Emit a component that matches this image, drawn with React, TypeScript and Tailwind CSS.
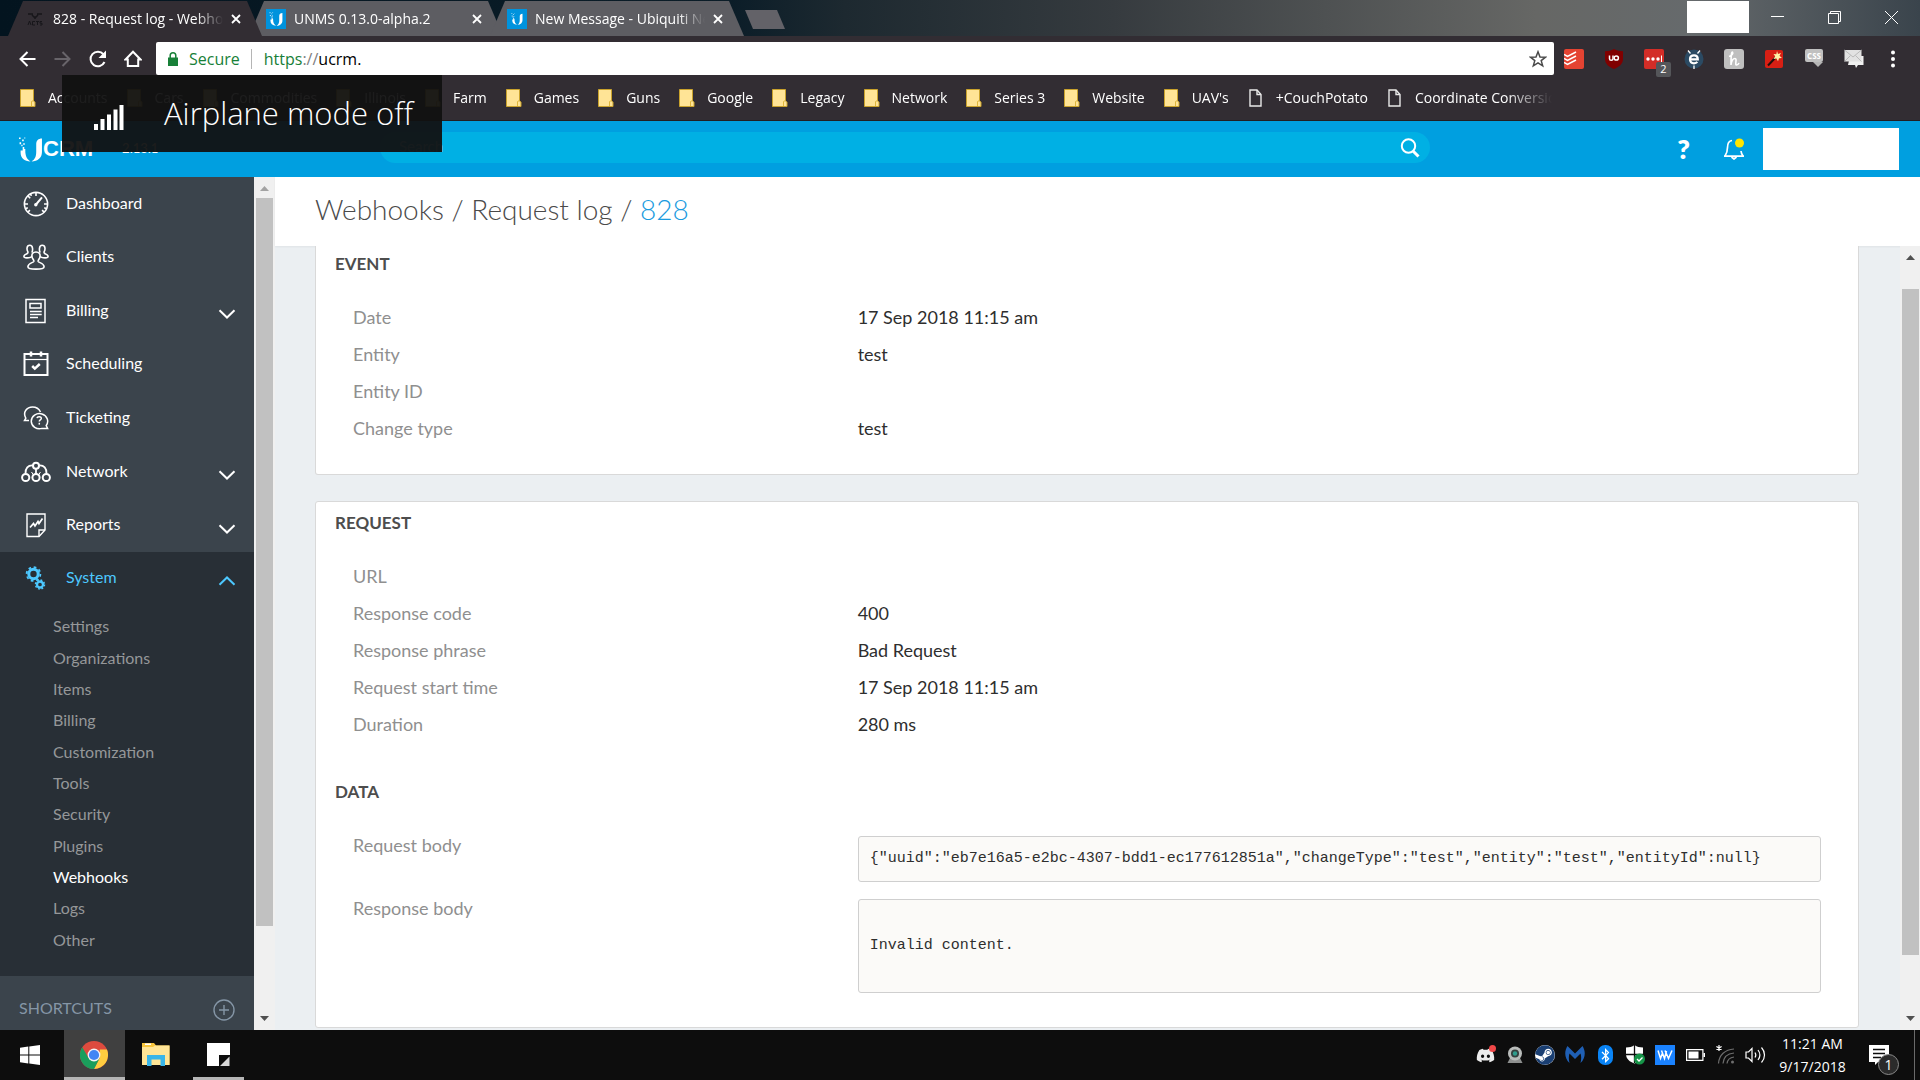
import type { ReactNode } from "react";
import { FaBluetoothB, FaDiscord, FaSteam } from "react-icons/fa";

const bookmarks = [
  { label: "Accounts", type: "folder" },
  { label: "Cars", type: "folder" },
  { label: "Commodities", type: "folder" },
  { label: "Illinois", type: "folder" },
  { label: "Farm", type: "folder" },
  { label: "Games", type: "folder" },
  { label: "Guns", type: "folder" },
  { label: "Google", type: "folder" },
  { label: "Legacy", type: "folder" },
  { label: "Network", type: "folder" },
  { label: "Series 3", type: "folder" },
  { label: "Website", type: "folder" },
  { label: "UAV's", type: "folder" },
  { label: "+CouchPotato", type: "page" },
  { label: "Coordinate Conversion", type: "page" },
];

const navItems = [
  { label: "Dashboard", icon: <GaugeIcon />, expandable: false },
  { label: "Clients", icon: <ClientsIcon />, expandable: false },
  { label: "Billing", icon: <BillingIcon />, expandable: true },
  { label: "Scheduling", icon: <CalendarIcon />, expandable: false },
  { label: "Ticketing", icon: <TicketingIcon />, expandable: false },
  { label: "Network", icon: <NetworkIcon />, expandable: true },
  { label: "Reports", icon: <ReportsIcon />, expandable: true },
];

const systemItems = [
  "Settings",
  "Organizations",
  "Items",
  "Billing",
  "Customization",
  "Tools",
  "Security",
  "Plugins",
  "Webhooks",
  "Logs",
  "Other",
];

const eventRows = [
  { label: "Date", value: "17 Sep 2018 11:15 am" },
  { label: "Entity", value: "test" },
  { label: "Entity ID", value: "" },
  { label: "Change type", value: "test" },
];

const requestRows = [
  { label: "URL", value: "" },
  { label: "Response code", value: "400" },
  { label: "Response phrase", value: "Bad Request" },
  { label: "Request start time", value: "17 Sep 2018 11:15 am" },
  { label: "Duration", value: "280 ms" },
];

const requestBody =
  '{"uuid":"eb7e16a5-e2bc-4307-bdd1-ec177612851a","changeType":"test","entity":"test","entityId":null}';

/* ---------- sidebar icons ---------- */

function GaugeIcon() {
  return (
    <svg width="26" height="26" viewBox="0 0 26 26" fill="none" stroke="currentColor" strokeWidth="1.6">
      <circle cx="13" cy="13" r="11.6" />
      <path d="M13 1.5v3.5M1.5 13H5M21 13h3.5M4.9 4.9l2.3 2.3M4.9 21.1l2-2M21.1 21.1l-2-2M7.5 2.8l.9 2M2.8 17.6l2-.8M23.2 17.6l-2-.8" />
      <path d="M13 13.5l6-7.2" strokeWidth="2" />
      <circle cx="12.8" cy="13.8" r="1.7" fill="currentColor" stroke="none" />
    </svg>
  );
}

function ClientsIcon() {
  return (
    <svg width="26" height="26" viewBox="0 0 26 26" fill="none" stroke="currentColor" strokeWidth="1.6">
      <path d="M8.800 8.600C9.800 7 10.400 1.300 6.800 1.300S3.800 6 4.800 7.600c.5 1-.2 1.800-1.400 2.300C1.800 10.500.9 11.300.9 12.600c0 1.200 2.100 1.500 4.800 1.200 1.500-.2 2.600-.8 3.300-1.600" />
      <path d="M17.200 8.600C16.200 7 15.600 1.300 19.200 1.300s3 4.700 2 6.300c-.5 1 .2 1.800 1.400 2.300 1.600.6 2.500 1.400 2.500 2.700 0 1.200-2.100 1.500-4.800 1.200-1.500-.2-2.600-.8-3.300-1.600" />
      <path d="M13 8c-3 0-4.500 2-4 4.800.4 2.200 2.300 3.200 1.800 4.700-.5 1.200-5.900 1.600-5.900 5.200 0 2.200 3.100 2.400 8.100 2.400s8.100-.2 8.100-2.400c0-3.600-5.400-4-5.900-5.200-.5-1.500 1.400-2.500 1.800-4.700C17.500 10 16 8 13 8z" />
    </svg>
  );
}

function BillingIcon() {
  return (
    <svg width="26" height="26" viewBox="0 0 26 26" fill="none" stroke="currentColor" strokeWidth="1.5">
      <rect x="3" y="1.5" width="19" height="23" />
      <rect x="7" y="5.500" width="11" height="4.500" />
      <path d="M7 13.500h11.700M7 16.500h11.700M7 19.500h8" strokeWidth="1.3" />
    </svg>
  );
}

function CalendarIcon() {
  return (
    <svg width="26" height="26" viewBox="0 0 26 26" fill="none" stroke="currentColor" strokeWidth="2">
      <path d="M1.500 3h23v21h-23z" />
      <path d="M2 8.500h22" strokeWidth="1.2" />
      <path d="M8 .5v5M18 .5v5" strokeWidth="2.500" />
      <path d="M9.200 15l2.600 2.600 5-4.600" strokeWidth="2.500" />
    </svg>
  );
}

function TicketingIcon() {
  return (
    <svg width="26" height="26" viewBox="0 0 26 26" fill="none" stroke="currentColor" strokeWidth="1.500">
      <path d="M6 15.600H1.500l1.300-2.400C-.6 7 4 2 9.500 2c4 0 6.600 2 8 5" />
      <path d="M23.200 20.500A8.200 7.600 0 1 0 19 23.400h5.600z" />
      <path d="M14 13.200c.3-2.200 4.500-2 4.300.3-.1 1.500-2 1.400-2 3" />
      <path d="M16.300 17.800v1.800" />
    </svg>
  );
}

function NetworkIcon() {
  return (
    <svg width="30" height="22" viewBox="0 0 30 22" fill="none" stroke="currentColor" strokeWidth="2">
      <circle cx="15" cy="4.800" r="3" />
      <circle cx="4.700" cy="16.500" r="3.600" />
      <circle cx="15" cy="16.500" r="3.600" />
      <circle cx="25.300" cy="16.500" r="3.600" />
      <path d="M15 8v5M12 4.500C7 4 4.300 7.500 4.500 12.500M18 4.500c5-.5 7.700 3 7.500 8" strokeWidth="1.800" />
      <path d="M12.500 14l-2-3M17.500 14l2-3" strokeWidth="1" />
    </svg>
  );
}

function ReportsIcon() {
  return (
    <svg width="26" height="26" viewBox="0 0 26 26" fill="none" stroke="currentColor" strokeWidth="1.400">
      <path d="M4 2h18v16l-6 6.500H4z" />
      <path d="M22 18h-6v6.500" />
      <path d="M7 15.500l3.500-4 1.500 2.500 3-4.500 1 2 3.500-5" strokeWidth="1.700" />
    </svg>
  );
}

function GearsIcon() {
  return (
    <svg width="26" height="26" viewBox="0 0 26 26" fill="none" stroke="currentColor">
      <circle cx="10.500" cy="9" r="4.700" strokeWidth="3" />
      <circle cx="10.500" cy="9" r="6.900" strokeWidth="1.800" strokeDasharray="2.700 2.720" />
      <circle cx="17" cy="19.500" r="3" strokeWidth="2.300" />
      <circle cx="17" cy="19.500" r="4.500" strokeWidth="1.500" strokeDasharray="1.770 1.770" />
    </svg>
  );
}

function Chevron({ up = false }: { up?: boolean }) {
  return (
    <svg width="18" height="10" viewBox="0 0 18 10" fill="none" stroke="currentColor" strokeWidth="2">
      <path d={up ? "M1.500 8.800L9 1.500l7.500 7.300" : "M1.500 1.200L9 8.500l7.500-7.300"} />
    </svg>
  );
}

/* ---------- browser icons ---------- */

function UbiquitiMark({ size }: { size: number }) {
  return (
    <svg width={size} height={size} viewBox="0 0 24 24" fill="#fff">
      <path d="M7 8.500v4.500c0 5 1.500 8.500 5 10.500-6-.3-9.500-3.500-9.500-8.500v-2h2V9.500h1.500v2H7z" />
      <path d="M23 1.500v13c0 5.500-4 9-10 9 3.500-2 4.500-5 4.500-9.500V7c0-3.500 2-5.500 5.500-5.500z" />
      <path d="M1 .5h1.500V2H1zM4 2.500h1.500V4H4zM1.500 5H3v2H1.500zM5 6h1.500v1.500H5zM6 .5h1v1H6zM3.200 7.500h1.200v1.300H3.200z" />
    </svg>
  );
}

function BookmarkIcon({ type }: { type: string }) {
  if (type === "page") {
    return (
      <svg className="shrink-0" width="16" height="18" viewBox="0 0 16 18" fill="none" stroke="#e9e9e9" strokeWidth="1.400">
        <path d="M2 1h7l4 4.500V17H2z" />
        <path d="M9 1v4.500h4" />
      </svg>
    );
  }
  return (
    <svg className="shrink-0" width="16" height="18" viewBox="0 0 16 18">
      <path d="M.5.5h13V12l1.500 1v4.500H.5z" fill="#ffe496" stroke="#c9a22c" />
      <path d="M11.500 17v-4.500l2-1" fill="none" stroke="#dfb63c" />
    </svg>
  );
}

function BrowserTab({ title, active = false, icon }: { title: string; active?: boolean; icon: ReactNode }) {
  return (
    <div
      className={`flex h-[35px] w-[254px] items-center pr-[21px] pl-[17px] [clip-path:polygon(0_100%,15px_0,239px_0,100%_100%)] ${
        active ? "z-10 bg-[#322d33]" : "-ml-[13px] bg-[#5d5d62]"
      }`}
    >
      <span className="flex size-5 shrink-0 items-center justify-center">{icon}</span>
      <span className="ml-2 flex-1 overflow-hidden text-[14px] whitespace-nowrap text-white [mask-image:linear-gradient(to_right,#000_84%,transparent)]">
        {title}
      </span>
      <button aria-label="Close tab" className="ml-2 shrink-0 text-white">
        <svg width="10" height="10" viewBox="0 0 10 10" stroke="currentColor" strokeWidth="1.800">
          <path d="M1 1l8 8M9 1L1 9" />
        </svg>
      </button>
    </div>
  );
}

function TabStrip() {
  return (
    <div className="flex h-[36px] items-end bg-[linear-gradient(to_right,#03141f_0%,#0b1d28_38%,#1d2930_44%,#363b3f_58%,#666765_80%,#666a6c_88%,#3a444c_100%)] pl-2">
      <BrowserTab
        active
        title="828 - Request log - Webhooks"
        icon={
          <svg width="16" height="14" viewBox="0 0 16 14" fill="none" stroke="#17161a">
            <path d="M1 2h5M10 2h5M5 3l2 2h2l2-2M8 5v2" strokeWidth="1.500" />
            <path d="M1 13l1.500-4L4 13M8 9.500H5.500V13H8M9 9.500h3M10.500 9.500V13M15 9.500h-2v1.700h2V13h-2" />
          </svg>
        }
      />
      <BrowserTab
        title="UNMS 0.13.0-alpha.2"
        icon={
          <span className="flex size-5 items-center justify-center bg-[#0093dd]">
            <UbiquitiMark size={14} />
          </span>
        }
      />
      <BrowserTab
        title="New Message - Ubiquiti Networks"
        icon={
          <span className="flex size-5 items-center justify-center bg-[#0093dd]">
            <UbiquitiMark size={12} />
          </span>
        }
      />
      <button
        aria-label="New tab"
        className="mb-[7px] ml-px h-[19px] w-10 bg-[#636268] [clip-path:polygon(0_0,32px_0,100%_100%,8px_100%)]"
      />
      <div className="ml-auto flex h-full items-center text-white">
        <div className="mb-0.5 h-8 w-[62px] bg-white" />
        <button aria-label="Minimize" className="flex w-[57px] justify-center">
          <svg width="13" height="13" viewBox="0 0 13 13" stroke="currentColor">
            <path d="M0 4.500h13" />
          </svg>
        </button>
        <button aria-label="Restore" className="flex w-[57px] justify-center">
          <svg width="13" height="15" viewBox="0 0 13 15" fill="none" stroke="currentColor">
            <path d="M.5 2.500h10v10H.5zM2.500 2.500v-2h10v10h-2" />
          </svg>
        </button>
        <button aria-label="Close" className="flex w-[57px] justify-center">
          <svg width="13" height="15" viewBox="0 0 13 15" stroke="currentColor">
            <path d="M0 0l13 13M13 0L0 13" />
          </svg>
        </button>
      </div>
    </div>
  );
}

function ToolButton({ label, children }: { label: string; children: ReactNode }) {
  return (
    <button aria-label={label} className="flex h-8 w-[35px] items-center justify-center text-white">
      {children}
    </button>
  );
}

function Extension({ label, children }: { label: string; children: ReactNode }) {
  return (
    <button aria-label={label} className="relative flex h-8 w-10 items-center justify-center">
      {children}
    </button>
  );
}

function Extensions() {
  return (
    <>
      <Extension label="Todo list">
        <svg width="20" height="20" viewBox="0 0 20 20" fill="none" stroke="#fff" strokeWidth="1.500">
          <rect width="20" height="20" rx="2" fill="#e44332" stroke="none" />
          <path d="M0 5.500l3.500 2L12 3M0 9.500l3.500 2L12 7M0 13.500l3.500 2L12 11" />
        </svg>
      </Extension>
      <Extension label="Ad blocker">
        <svg width="20" height="20" viewBox="0 0 20 20">
          <path d="M10 0c3 1.800 5.500 2.200 9 2.200V10c0 5-4 8-9 10-5-2-9-5-9-10V2.200C4.500 2.200 7 1.800 10 0z" fill="#800000" />
          <path d="M5.500 6.500v3.200c0 2.200 3.500 2.200 3.500 0V6.500" fill="none" stroke="#fff" strokeWidth="1.500" />
          <circle cx="12.300" cy="9" r="2.100" fill="none" stroke="#fff" strokeWidth="1.500" />
        </svg>
      </Extension>
      <Extension label="Password manager">
        <svg width="20" height="20" viewBox="0 0 20 20" fill="#fff">
          <rect width="20" height="20" rx="2" fill="#d32d27" />
          <circle cx="4" cy="10" r="1.700" />
          <circle cx="9" cy="10" r="1.700" />
          <circle cx="14" cy="10" r="1.700" />
          <path d="M17 6.500h1v7h-1z" />
        </svg>
        <span className="absolute top-[19px] left-[22px] flex h-[15px] w-[15px] items-center justify-center rounded-xs bg-[#55565a] text-[11px] text-white">
          2
        </span>
      </Extension>
      <Extension label="Page inspector">
        <svg width="20" height="20" viewBox="0 0 20 20" fill="none" stroke="#fff">
          <circle cx="10" cy="10" r="9.500" fill="#2b4a63" stroke="none" />
          <path d="M4 1.500l2.500 3M16 1.500l-2.500 3M10 16.500V20" strokeWidth="1.300" />
          <path d="M6.500 10.300h7.300c0-2.700-1.400-4-3.800-4s-4 1.600-4 4 1.600 4 4 4c1.500 0 2.600-.5 3.300-1.400" strokeWidth="2.200" />
        </svg>
      </Extension>
      <Extension label="Coupons">
        <svg width="20" height="20" viewBox="0 0 20 20" fill="none" stroke="#fff" strokeWidth="1.600">
          <rect width="20" height="20" rx="3" fill="#bfbfbf" stroke="none" />
          <path d="M5 7.500c3-1 4.500-3 3.500-4.300C7.500 2.500 7 6 7 16c.5-4 2-6.500 4-6.500 2.500 0-.5 6.500 1.500 6.500 1 0 2-.8 2.500-2" />
        </svg>
      </Extension>
      <Extension label="Wand">
        <svg width="20" height="20" viewBox="0 0 20 20">
          <rect x="1" y="1" width="18" height="18" rx="2" fill="#d81f14" />
          <path d="M4 16.500l8-8.500" stroke="#20100c" strokeWidth="2" />
          <path d="M13 2l1 3 3-1-1.500 2.800L18 9l-3 .2-1 3-1.500-2.700-3 .5 1.700-2.700L9.500 5l2.800.3z" fill="#fff3a8" />
        </svg>
      </Extension>
      <Extension label="Stylesheet viewer">
        <span className="flex h-5 w-[18px] flex-col items-center">
          <span className="flex h-[13px] w-[18px] items-center justify-center rounded-xs bg-[#c0c0c0] text-[8px] font-bold text-white">
            CSS
          </span>
          <svg className="ml-2" width="10" height="5" viewBox="0 0 10 5" fill="#b5b5b5">
            <path d="M0 0h10L5 5z" />
          </svg>
        </span>
      </Extension>
      <Extension label="Mail">
        <svg width="20" height="20" viewBox="0 0 20 20">
          <path d="M6 7h13.500v9H14l-2 3-1-3H4z" fill="#f0f0f0" />
          <path d="M.5 1h17v11.500H.5z" fill="#e2e2e2" />
          <path d="M.5 1L9 8l8.500-7M.5 12.500l6-6M17.500 12.500l-6-6" fill="none" stroke="#b0b0b0" strokeWidth=".8" />
        </svg>
      </Extension>
    </>
  );
}

function Toolbar() {
  return (
    <div className="flex h-[39px] items-end bg-[#322d33] pl-[10px]">
      <ToolButton label="Back">
        <svg width="17" height="16" viewBox="0 0 17 16" fill="none" stroke="currentColor" strokeWidth="2">
          <path d="M16.500 8H1.500M8.500 1L1.500 8l7 7" />
        </svg>
      </ToolButton>
      <ToolButton label="Forward">
        <svg width="17" height="16" viewBox="0 0 17 16" fill="none" stroke="#68646a" strokeWidth="2">
          <path d="M.5 8h15M8.500 1l7 7-7 7" />
        </svg>
      </ToolButton>
      <ToolButton label="Reload">
        <svg width="18" height="18" viewBox="0 0 18 18" fill="none" stroke="currentColor" strokeWidth="2">
          <path d="M15.500 12A7.300 7.300 0 1 1 14.500 4.300" />
          <path d="M17 .5V8H9.500z" fill="currentColor" stroke="none" />
        </svg>
      </ToolButton>
      <ToolButton label="Home">
        <svg width="18" height="18" viewBox="0 0 18 18" fill="none" stroke="currentColor" strokeWidth="2">
          <path d="M1.500 9.500L9 1.800l7.500 7.700h-2.300V16H3.800V9.500z" />
        </svg>
      </ToolButton>
      <div className="ml-[6px] flex h-[33px] min-w-0 flex-1 items-center rounded-xs bg-white pr-[7px] pl-3 text-[16px]">
        <svg width="10" height="14" viewBox="0 0 10 14">
          <path d="M0 5.500h10V14H0z" fill="#188038" />
          <path d="M2.200 6V3.600a2.800 2.800 0 0 1 5.600 0V6" fill="none" stroke="#188038" strokeWidth="1.500" />
        </svg>
        <span className="ml-[11px] text-[#188038]">Secure</span>
        <span className="ml-[11px] h-5 w-px bg-[#b5b5b5]" />
        <button aria-label="Edit address" className="ml-3 flex-1 text-left text-black">
          <span className="text-[#188038]">https</span>
          <span className="text-[#808080]">://</span>ucrm.
        </button>
        <button aria-label="Bookmark this page">
          <svg width="18" height="18" viewBox="0 0 18 18" fill="none" stroke="#4a4a4a" strokeWidth="1.500">
            <path d="M9 1.800l2 5.200 5.500.2-4.300 3.400 1.500 5.300L9 12.900l-4.700 3 1.500-5.300L1.500 7.200 7 7z" />
          </svg>
        </button>
      </div>
      <Extensions />
      <button aria-label="Menu" className="flex h-8 w-[46px] items-center justify-center pr-2">
        <svg width="4" height="18" viewBox="0 0 4 18" fill="#fff">
          <circle cx="2" cy="2.500" r="2" />
          <circle cx="2" cy="9" r="2" />
          <circle cx="2" cy="15.500" r="2" />
        </svg>
      </button>
    </div>
  );
}

function BookmarksBar() {
  return (
    <nav className="h-[46px] border-b border-[#221e22] bg-[#322d33] pl-5">
      <ul className="flex h-full w-[1532px] items-center gap-[19px] overflow-hidden [mask-image:linear-gradient(to_right,#000_97%,transparent)]">
        {bookmarks.map((item) => (
          <li key={item.label}>
            <a href="#" className="flex items-center gap-3 text-[14px] whitespace-nowrap text-white">
              <BookmarkIcon type={item.type} />
              {item.label}
            </a>
          </li>
        ))}
      </ul>
    </nav>
  );
}

/* ---------- application ---------- */

function AppHeader() {
  return (
    <header className="flex h-[56px] shrink-0 items-center bg-[#009fe0] text-white">
      <div className="flex w-[380px] shrink-0 items-center pl-[18px]">
        <UbiquitiMark size={25} />
        <span className="font-['Liberation_Sans',sans-serif] text-[22px] leading-6 font-bold">CRM</span>
        <span className="ml-[29px] text-[13px]">2.13.1</span>
      </div>
      <div className="mb-[3px] flex h-[31px] min-w-0 flex-1 items-center rounded-full bg-[#00b0e4] pr-[10px] pl-[19px]">
        <input
          type="text"
          aria-label="Search"
          placeholder="Search"
          className="min-w-0 flex-1 bg-transparent pb-[3px] text-[15px] outline-none placeholder:text-white/50"
        />
        <button aria-label="Run search">
          <svg width="20" height="20" viewBox="0 0 20 20" fill="none" stroke="currentColor" strokeWidth="2">
            <circle cx="8.500" cy="8" r="6.700" />
            <path d="M13 13l5.500 5.500" strokeWidth="3" />
          </svg>
        </button>
      </div>
      <div className="flex w-[490px] shrink-0 items-center justify-end pr-[21px] pb-px">
        <button aria-label="Help" className="text-[27px] leading-9 font-extrabold">
          ?
        </button>
        <button aria-label="Notifications" className="mr-[18px] ml-[33px]">
          <svg width="22" height="22" viewBox="0 0 22 22" fill="none" stroke="currentColor" strokeWidth="1.700">
            <path d="M9 2.500C5.500 3 4.500 6 4.500 9.500S4 15 2 18M18 13c.2 2 .8 3.500 2 5M1 18.200h20" />
            <path d="M8.500 19l2.500 2 2.500-2" />
            <circle cx="16.500" cy="5" r="4.500" fill="#ffe600" stroke="none" />
          </svg>
        </button>
        <div className="h-[42px] w-[136px] bg-white" />
      </div>
    </header>
  );
}

function Sidebar() {
  return (
    <aside className="w-[254px] shrink-0 overflow-hidden bg-[#3b444c] text-[16px]">
      <ul className="grid h-[375px] grid-rows-7">
        {navItems.map((item) => (
          <li key={item.label}>
            <a href="#" className="flex h-full items-center pr-[18px] pl-[21px] text-white">
              <span className="flex w-[30px] items-center justify-center">{item.icon}</span>
              <span className="ml-[15px] flex-1 pb-0.5">{item.label}</span>
              {item.expandable && (
                <span className="pt-[7px]">
                  <Chevron />
                </span>
              )}
            </a>
          </li>
        ))}
      </ul>
      <div className="bg-[#282f36] pb-5">
        <a href="#" className="flex h-[51px] items-center pr-[18px] pl-[21px] text-[#4dc8ff]">
          <span className="flex w-[30px] items-center justify-center">
            <GearsIcon />
          </span>
          <span className="ml-[15px] flex-1 pb-0.5">System</span>
          <span className="pt-[7px]">
            <Chevron up />
          </span>
        </a>
        <ul className="mt-2 grid h-[345px] grid-rows-11">
          {systemItems.map((label) => (
            <li key={label} className="flex items-center pb-px pl-[53px]">
              <a href="#" className={label === "Webhooks" ? "text-white" : "text-[#959799]"}>
                {label}
              </a>
            </li>
          ))}
        </ul>
      </div>
      <div className="flex h-16 items-center justify-between pr-[19px] pl-[19px] text-[#8596a6]">
        <span className="text-[16px]">SHORTCUTS</span>
        <button aria-label="Add shortcut" className="pt-1">
          <svg width="22" height="22" viewBox="0 0 22 22" fill="none" stroke="currentColor" strokeWidth="1.400">
            <circle cx="11" cy="11" r="10" />
            <path d="M11 6v10M6 11h10" />
          </svg>
        </button>
      </div>
    </aside>
  );
}

function ScrollArrow({ down = false, muted = false }: { down?: boolean; muted?: boolean }) {
  return (
    <svg width="9" height="5" viewBox="0 0 9 5" fill={muted ? "#a3a3a3" : "#505050"}>
      <path d={down ? "M0 0h9L4.500 5z" : "M0 5h9L4.500 0z"} />
    </svg>
  );
}

function DetailRow({ label, value }: { label: string; value: string }) {
  return (
    <div className="grid h-[37px] grid-cols-[11fr_21fr] items-center">
      <dt className="text-[#8f8f8f]">{label}</dt>
      <dd className="text-[#2e2e2e]">{value}</dd>
    </div>
  );
}

function BodyRow({ label, children }: { label: string; children: ReactNode }) {
  return (
    <div className="grid grid-cols-[11fr_21fr] pb-2">
      <dt className="h-[37px] leading-[37px] text-[#8f8f8f]">{label}</dt>
      <dd className="pt-[9px]">
        <pre className="rounded-[3px] border border-[#cfcfcf] bg-[#fbfaf8] px-[11px] py-[10px] font-['Liberation_Mono',monospace] text-[15px] leading-6 text-[#2e2e2e]">
          {children}
        </pre>
      </dd>
    </div>
  );
}

function SectionTitle({ children }: { children: ReactNode }) {
  return <h2 className="mb-[23px] px-[19px] text-[17px] leading-6 font-bold text-[#4d4d4d]">{children}</h2>;
}

function RequestLogPage() {
  return (
    <main className="flex min-w-0 flex-1 flex-col bg-[#ebeff2]">
      <div className="flex h-[69px] shrink-0 items-center bg-white pb-[5px] pl-10 shadow-xs">
        <h1 className="text-[28px] font-light text-[#4a4a4a]">
          <a href="#">Webhooks</a> / <a href="#">Request log</a> / <span className="text-[#1a9be0]">828</span>
        </h1>
      </div>
      <div className="flex min-h-0 flex-1">
        <div className="min-w-0 flex-1 overflow-hidden pr-[41px] pl-10 text-[18px]">
          <section className="rounded-b-[3px] border border-t-0 border-[#d9d9d9] bg-white pt-[6px] pb-[27px]">
            <SectionTitle>EVENT</SectionTitle>
            <dl className="px-[37px]">
              {eventRows.map((row) => (
                <DetailRow key={row.label} {...row} />
              ))}
            </dl>
          </section>
          <section className="mt-[26px] rounded-[3px] border border-[#d9d9d9] bg-white pt-[9px] pb-[26px]">
            <SectionTitle>REQUEST</SectionTitle>
            <dl className="mb-[37px] px-[37px]">
              {requestRows.map((row) => (
                <DetailRow key={row.label} {...row} />
              ))}
            </dl>
            <SectionTitle>DATA</SectionTitle>
            <dl className="px-[37px]">
              <BodyRow label="Request body">{requestBody}</BodyRow>
              <BodyRow label="Response body">{"\nInvalid content.\n "}</BodyRow>
            </dl>
          </section>
        </div>
        <div className="flex w-5 shrink-0 flex-col items-center justify-between bg-[#f0f0f0] py-[9px]">
          <ScrollArrow />
          <div className="mt-[29px] mb-[61px] w-[17px] flex-1 bg-[#c1c1c1]" />
          <ScrollArrow down />
        </div>
      </div>
    </main>
  );
}

/* ---------- desktop ---------- */

function SignalOverlay() {
  return (
    <div className="absolute top-[75px] left-[62px] z-20 flex h-[77px] w-[380px] items-center bg-[#111111]/95 pl-8 text-white">
      <svg className="mt-2" width="30" height="25" viewBox="0 0 30 25" fill="#fff">
        <path d="M0 19h4v6H0zM6.500 14h4v11h-4zM13 9.500h4V25h-4zM19.500 4.500h4V25h-4zM25.500 0h4v25h-4z" />
      </svg>
      <span className="ml-10 text-[31px] font-light whitespace-nowrap">Airplane mode off</span>
    </div>
  );
}

function TrayIcon({ label, children }: { label: string; children: ReactNode }) {
  return (
    <button aria-label={label} className="flex h-full w-[30px] items-center justify-center">
      {children}
    </button>
  );
}

function Taskbar() {
  return (
    <footer className="flex h-[50px] shrink-0 bg-[#0d0d0d] text-white">
      <button aria-label="Start" className="flex w-16 items-center justify-center pr-1">
        <svg width="20" height="20" viewBox="0 0 20 20" fill="#fff">
          <path d="M0 2.800l8.300-1.200v8H0zM9.300 1.500L20 0v9.600H9.300zM0 10.500h8.300v8L0 17.300zM9.300 10.500H20V20L9.300 18.600z" />
        </svg>
      </button>
      <button aria-label="Chrome" className="flex w-[61px] flex-col items-center bg-[#404040]">
        <span className="flex flex-1 items-center pt-0.5 pr-0.5">
          <svg width="28" height="28" viewBox="0 0 28 28">
            <circle cx="14" cy="14" r="14" fill="#dd4b3e" />
            <path d="M26.900 8.500A14 14 0 0 1 14 28L19.800 16.500V8.500z" fill="#ffcd40" />
            <path d="M2.300 6.300A14 14 0 0 0 14 28l5.500-10.500L8.500 17z" fill="#1a9e5c" />
            <circle cx="14" cy="14" r="6.400" fill="#f4f4f4" />
            <circle cx="14" cy="14" r="5.100" fill="#4285f4" />
          </svg>
        </span>
        <span className="h-[3px] w-full bg-[#b5b5b5]" />
      </button>
      <button aria-label="File Explorer" className="flex w-[62px] items-center justify-center pb-0.5">
        <svg width="28" height="24" viewBox="0 0 28 24">
          <path d="M0 1h12l2 2.500h13.500V23H0z" fill="#f8c63d" />
          <path d="M3 1.500h6v1.500H3z" fill="#fff" />
          <path d="M0 5h11l2-1.500h14.500V23H0z" fill="#ffe596" />
          <path d="M5 13h18v11h-4.500v-6.500h-9V24H5z" fill="#38b5e8" />
        </svg>
      </button>
      <button aria-label="Notes" className="flex w-[62px] flex-col items-center">
        <span className="flex flex-1 items-center pt-0.5">
          <svg width="23" height="23" viewBox="0 0 23 23">
            <path d="M0 0h23v23H0z" fill="#fff" />
            <path d="M12 12h11v11H12z" fill="#0d0d0d" />
            <path d="M22.500 13.500v9.500H13z" fill="#d8d8d8" />
          </svg>
        </span>
        <span className="h-[3px] w-[51px] bg-[#b5b5b5]" />
      </button>

      <div className="ml-auto flex">
        <TrayIcon label="Discord">
          <span className="relative">
            <FaDiscord size={19} color="#ececec" />
            <span className="absolute -top-px -right-px size-[7px] rounded-full bg-[#f04747]" />
          </span>
        </TrayIcon>
        <TrayIcon label="Webcam">
          <svg width="16" height="18" viewBox="0 0 16 18">
            <path d="M3 12h10l2.500 5H.5z" fill="#8d8f8e" />
            <circle cx="8" cy="7.500" r="7" fill="#b9bcba" />
            <circle cx="8" cy="7.500" r="4" fill="#35403e" />
            <circle cx="8" cy="7.500" r="2.200" fill="#2f9d8d" />
          </svg>
        </TrayIcon>
        <TrayIcon label="Steam">
          <span className="rounded-full bg-white">
            <FaSteam size={20} color="#1a3f73" />
          </span>
        </TrayIcon>
        <TrayIcon label="Malware scanner">
          <svg width="20" height="18" viewBox="0 0 20 18" fill="#1f5fb4">
            <path d="M2.500 0L10 7.500 17.500 0C21 5.500 20.500 12 15.500 17c1-4 .8-7.500 0-9.500L10 13 4.500 7.500c-.8 2-1 5.500 0 9.500C-.5 12-1 5.500 2.500 0z" />
          </svg>
        </TrayIcon>
        <TrayIcon label="Bluetooth">
          <span className="flex h-5 w-[15px] items-center justify-center rounded-[7px] bg-[#0a84f5]">
            <FaBluetoothB size={15} color="#fff" />
          </span>
        </TrayIcon>
        <TrayIcon label="Security">
          <svg width="20" height="20" viewBox="0 0 20 20">
            <path d="M9.500 0C12 1.800 14.500 2.500 18 2.500V9c0 5-4 8-8.500 9.500C5 17 1 14 1 9V2.500C4.500 2.500 7 1.800 9.500 0z" fill="#fff" />
            <path d="M9.500 0v18M1 9.500h17" stroke="#0d0d0d" strokeWidth="1.300" />
            <circle cx="14.500" cy="14" r="5.500" fill="#159447" />
            <path d="M12 14l2 2 3.500-3.500" fill="none" stroke="#fff" strokeWidth="1.300" />
          </svg>
        </TrayIcon>
        <TrayIcon label="Sync">
          <svg width="20" height="20" viewBox="0 0 20 20">
            <path d="M0 0h20v20H0z" fill="#1a82ff" />
            <path d="M3 5.500l2.500 8L7.500 8M6.500 5.500l3 8L11.500 6M10 5.500l3.500 8L17 5.500" fill="none" stroke="#fff" strokeWidth="1.500" />
          </svg>
        </TrayIcon>
        <TrayIcon label="Battery">
          <svg width="19" height="12" viewBox="0 0 19 12">
            <path d="M.6.6h16.300v10.800H.6z" fill="none" stroke="#fff" strokeWidth="1.200" />
            <path d="M2.500 2.500h10v7h-10zM17.500 4h1.500v4h-1.500z" fill="#fff" />
          </svg>
        </TrayIcon>
        <TrayIcon label="Wireless">
          <svg width="19" height="20" viewBox="0 0 19 20" fill="none" stroke="#6e6e6e" strokeWidth="1.200">
            <path d="M2.500 18.500C3 10 9 4.500 18 4M7 18.500c.5-6 4.500-10 11-10.500M11 18.500c.5-4 3-6 7-6.500" />
            <circle cx="16.500" cy="17" r="1.500" fill="#6e6e6e" stroke="none" />
            <path d="M3 0v6M.4 1.500l5.200 3M5.600 1.500l-5.200 3" stroke="#fff" />
          </svg>
        </TrayIcon>
        <TrayIcon label="Volume">
          <svg width="21" height="18" viewBox="0 0 21 18" fill="none" stroke="#fff" strokeWidth="1.200">
            <path d="M1 6h2.500L7 2.500v13L3.500 12H1z" />
            <path d="M10 6.500c1 1.500 1 3.500 0 5M13 4c2.300 3 2.300 7 0 10M16.500 1.500c4 4.500 4 10.500 0 15" />
          </svg>
        </TrayIcon>
        <time className="flex w-[85px] flex-col items-center justify-center text-[14px] leading-[23px]">
          <span>11:21 AM</span>
          <span>9/17/2018</span>
        </time>
        <button aria-label="Notification center" className="relative mr-[5px] w-[60px] border-r border-[#6a6a6a]">
          <svg className="ml-[14px]" width="20" height="20" viewBox="0 0 20 20">
            <path d="M0 0h20v17H9l-3 3v-3H0z" fill="#fff" />
            <path d="M4 4.500h12M4 8.500h12M4 12.500h8" stroke="#0d0d0d" strokeWidth="1.300" />
          </svg>
          <span className="absolute top-6 left-[23px] flex size-[21px] items-center justify-center rounded-full border border-[#8a8a8a] bg-[#2b2b2b] text-[14px]">
            1
          </span>
        </button>
      </div>
    </footer>
  );
}

export default function App() {
  return (
    <div className="relative flex h-screen flex-col overflow-hidden bg-[#ebeff2] font-['Open_Sans','Noto_Sans',sans-serif]">
      <div className="shrink-0">
        <TabStrip />
        <Toolbar />
        <BookmarksBar />
      </div>
      <div className="flex min-h-0 flex-1 flex-col font-['Lato',sans-serif]">
        <AppHeader />
        <div className="flex min-h-0 flex-1">
          <Sidebar />
          <div className="flex w-[21px] shrink-0 flex-col items-center bg-[#f0f0f0] py-[9px]">
            <ScrollArrow muted />
            <div className="mt-[7px] mb-[90px] w-[17px] flex-1 bg-[#c1c1c1]" />
            <ScrollArrow down />
          </div>
          <RequestLogPage />
        </div>
      </div>
      <Taskbar />
      <SignalOverlay />
    </div>
  );
}
